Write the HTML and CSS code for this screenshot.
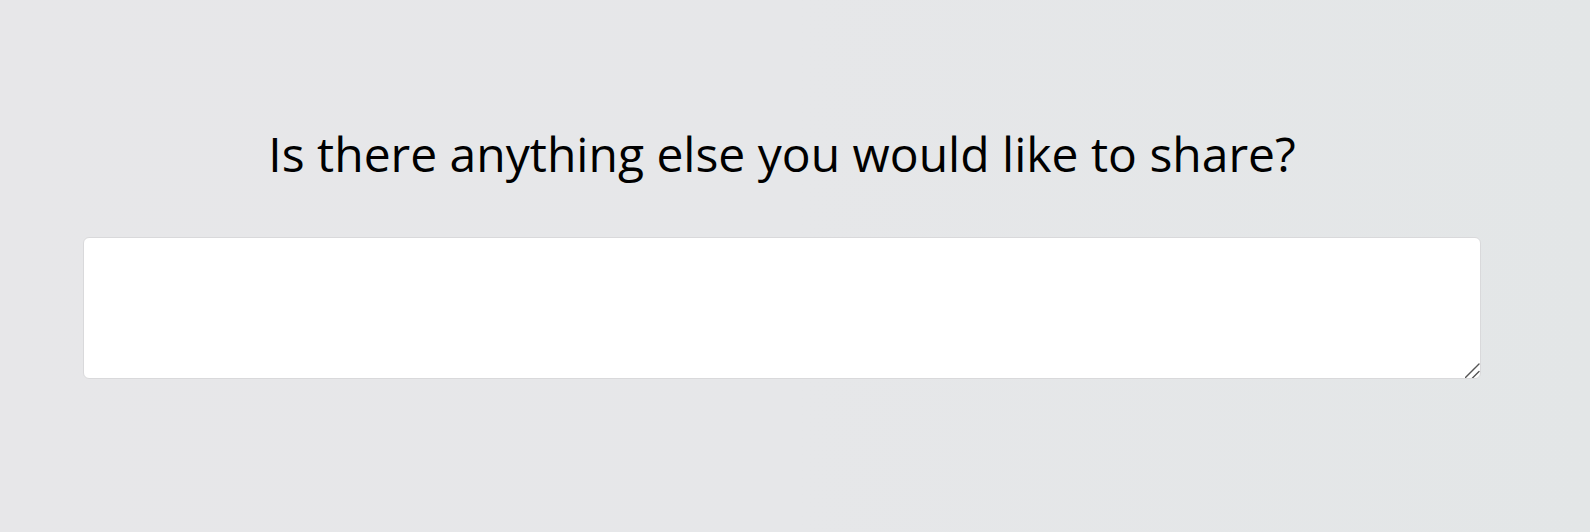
FILE: index.html
```html
<!DOCTYPE html>
<html lang="en">
<head>
<meta charset="utf-8">
<title>Share</title>
<link rel="stylesheet" href="styles.css">
</head>
<body>
<main class="page">
  <section class="question">
    <h1 class="question-title">Is there anything else you would like to share?</h1>
    <textarea class="answer" aria-label="Your answer"></textarea>
  </section>
</main>
</body>
</html>
```
FILE: styles.css
```css
html, body {
  margin: 0;
  padding: 0;
  height: 100%;
}
body {
  background: linear-gradient(90deg, #e7e7e9 0%, #e6e7e9 50%, #e3e6e7 100%);
  font-family: "Open Sans", "Noto Sans", sans-serif;
  color: #000;
}
.page {
  padding: 0 109px 0 83px;
}
.question {
  display: flex;
  flex-direction: column;
  align-items: stretch;
}
.question-title {
  margin: 118px 0 0;
  font-size: 48px;
  font-weight: 400;
  line-height: 72px;
  text-align: center;
  letter-spacing: 0;
}
.answer {
  display: block;
  margin-top: 47px;
  height: 142px;
  box-sizing: border-box;
  border: 1px solid #d9d9db;
  border-radius: 6px;
  background: #fff;
  padding: 10px 14px;
  font-family: inherit;
  font-size: 18px;
  outline: none;
  resize: vertical;
}
.answer::-webkit-scrollbar {
  width: 16px;
  height: 16px;
  background: transparent;
}
.answer::-webkit-resizer {
  background-color: transparent;
  background-repeat: no-repeat;
  background-size: 16px 16px;
  background-image: url("data:image/svg+xml;utf8,<svg xmlns='http://www.w3.org/2000/svg' width='16' height='16' viewBox='0 0 16 16'><path d='M0 15 L14 1 M7.5 15 L14 8.5' stroke='%23555' stroke-width='1.4' stroke-linecap='round' fill='none'/></svg>");
}
```
